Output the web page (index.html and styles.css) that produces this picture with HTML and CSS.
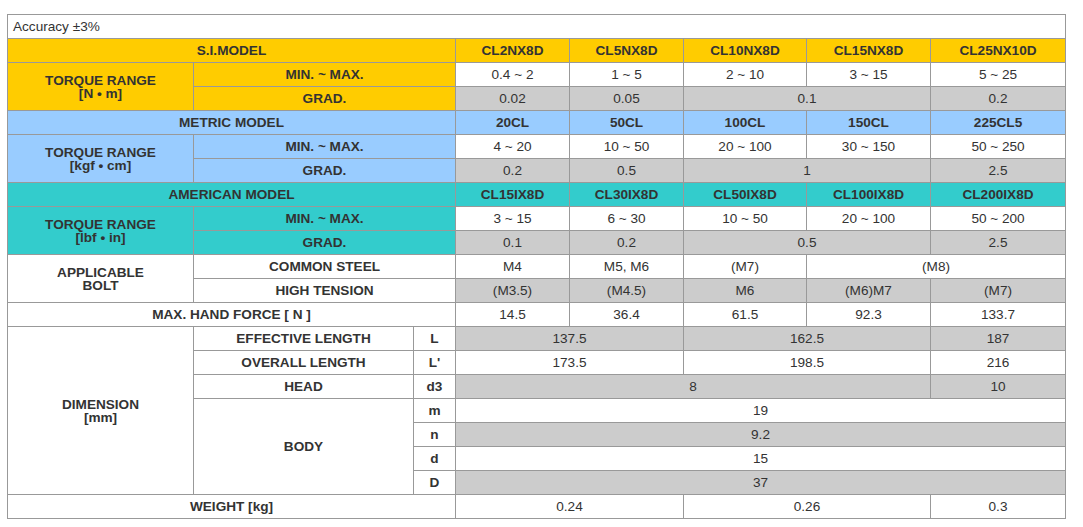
FILE: index.html
```html
<!DOCTYPE html>
<html>
<head>
<meta charset="utf-8">
<link rel="stylesheet" href="styles.css">
</head>
<body>
<div class="wrap">
<table class="spec">
  <colgroup>
    <col class="c1"><col class="c2"><col class="c3"><col class="c4"><col class="c5"><col class="c6"><col class="c7"><col class="c8">
  </colgroup>
  <tr><td colspan="8" class="note">Accuracy ±3%</td></tr>

  <tr class="si"><th colspan="3">S.I.MODEL</th><th>CL2NX8D</th><th>CL5NX8D</th><th>CL10NX8D</th><th>CL15NX8D</th><th>CL25NX10D</th></tr>
  <tr><th rowspan="2" class="si">TORQUE RANGE<br>[N • m]</th><th colspan="2" class="si">MIN. ~ MAX.</th><td>0.4 ~ 2</td><td>1 ~ 5</td><td>2 ~ 10</td><td>3 ~ 15</td><td>5 ~ 25</td></tr>
  <tr class="gr"><th colspan="2" class="si">GRAD.</th><td>0.02</td><td>0.05</td><td colspan="2">0.1</td><td>0.2</td></tr>

  <tr class="me"><th colspan="3">METRIC MODEL</th><th>20CL</th><th>50CL</th><th>100CL</th><th>150CL</th><th>225CL5</th></tr>
  <tr><th rowspan="2" class="me">TORQUE RANGE<br>[kgf • cm]</th><th colspan="2" class="me">MIN. ~ MAX.</th><td>4 ~ 20</td><td>10 ~ 50</td><td>20 ~ 100</td><td>30 ~ 150</td><td>50 ~ 250</td></tr>
  <tr class="gr"><th colspan="2" class="me">GRAD.</th><td>0.2</td><td>0.5</td><td colspan="2">1</td><td>2.5</td></tr>

  <tr class="am"><th colspan="3">AMERICAN MODEL</th><th>CL15IX8D</th><th>CL30IX8D</th><th>CL50IX8D</th><th>CL100IX8D</th><th>CL200IX8D</th></tr>
  <tr><th rowspan="2" class="am">TORQUE RANGE<br>[lbf • in]</th><th colspan="2" class="am">MIN. ~ MAX.</th><td>3 ~ 15</td><td>6 ~ 30</td><td>10 ~ 50</td><td>20 ~ 100</td><td>50 ~ 200</td></tr>
  <tr class="gr"><th colspan="2" class="am">GRAD.</th><td>0.1</td><td>0.2</td><td colspan="2">0.5</td><td>2.5</td></tr>

  <tr><th rowspan="2">APPLICABLE<br>BOLT</th><th colspan="2">COMMON STEEL</th><td>M4</td><td>M5, M6</td><td>(M7)</td><td colspan="2">(M8)</td></tr>
  <tr class="gr"><th colspan="2">HIGH TENSION</th><td>(M3.5)</td><td>(M4.5)</td><td>M6</td><td>(M6)M7</td><td>(M7)</td></tr>

  <tr><th colspan="3">MAX. HAND FORCE [ N ]</th><td>14.5</td><td>36.4</td><td>61.5</td><td>92.3</td><td>133.7</td></tr>

  <tr class="gr"><th rowspan="7">DIMENSION<br>[mm]</th><th>EFFECTIVE LENGTH</th><th>L</th><td colspan="2">137.5</td><td colspan="2">162.5</td><td>187</td></tr>
  <tr><th>OVERALL LENGTH</th><th>L'</th><td colspan="2">173.5</td><td colspan="2">198.5</td><td>216</td></tr>
  <tr class="gr"><th>HEAD</th><th>d3</th><td colspan="4">8</td><td>10</td></tr>
  <tr><th rowspan="4">BODY</th><th>m</th><td colspan="5">19</td></tr>
  <tr class="gr"><th>n</th><td colspan="5">9.2</td></tr>
  <tr><th>d</th><td colspan="5">15</td></tr>
  <tr class="gr"><th>D</th><td colspan="5">37</td></tr>

  <tr><th colspan="3">WEIGHT [kg]</th><td colspan="2">0.24</td><td colspan="2">0.26</td><td>0.3</td></tr>
</table>
</div>
</body>
</html>
```

FILE: styles.css
```css
html, body {
  margin: 0;
  padding: 0;
  background: #ffffff;
}

.wrap {
  padding: 14px 0 0 7px;
}

.spec {
  border-collapse: collapse;
  table-layout: fixed;
  width: 1059px;
  font-family: "Liberation Sans", Arial, sans-serif;
  font-size: 13.6px;
  color: #333333;
}

.c1 { width: 186px; }
.c2 { width: 220px; }
.c3 { width: 42px; }
.c4 { width: 114px; }
.c5 { width: 114px; }
.c6 { width: 123px; }
.c7 { width: 124px; }
.c8 { width: 135px; }

.spec th,
.spec td {
  border: 1px solid #999999;
  height: 23px;
  padding: 0 2px;
  text-align: center;
  vertical-align: middle;
  line-height: 13px;
  background: #ffffff;
}

.spec th {
  font-weight: bold;
  color: #333333;
}

.spec td {
  font-weight: normal;
}

.spec td.note {
  text-align: left;
  padding-left: 5px;
}

.spec tr.gr td {
  background: #cccccc;
}

.spec tr.si th,
.spec th.si {
  background: #ffcc00;
}

.spec tr.me th,
.spec th.me {
  background: #99ccff;
}

.spec tr.am th,
.spec th.am {
  background: #33cccc;
}
```
